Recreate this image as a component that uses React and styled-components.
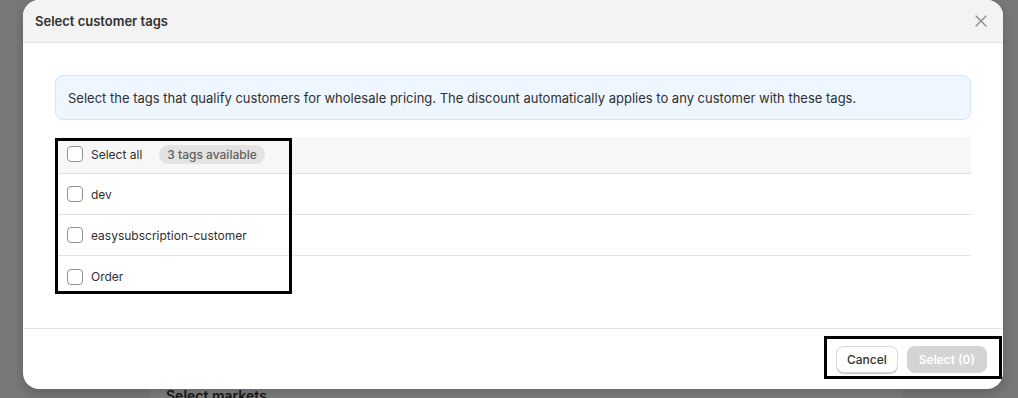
import React from 'react'
import styled, { createGlobalStyle } from 'styled-components'

const GlobalStyle = createGlobalStyle`
  html, body {
    margin: 0;
    padding: 0;
    width: 1018px;
    height: 398px;
    overflow: hidden;
    font-family: Inter, "Noto Sans", "Liberation Sans", sans-serif;
    background: #f1f1f1;
  }
`;

const tags = ['dev', 'easysubscription-customer', 'Order'];

const App = () => {
  return (
    <Screen>
      <GlobalStyle />
      <BackPage>
        <BackCard>Select markets</BackCard>
      </BackPage>
      <Backdrop />
      <Modal>
        <Header>
          <Title>Select customer tags</Title>
          <CloseButton aria-label="Close">
            <svg width="12" height="12" viewBox="0 0 12 12">
              <path d="M1 1L11 11M11 1L1 11" stroke="#8a8a8a" strokeWidth="1.4" strokeLinecap="round" />
            </svg>
          </CloseButton>
        </Header>
        <Body>
          <Banner>
            Select the tags that qualify customers for wholesale pricing. The discount automatically applies to any customer with these tags.
          </Banner>
          <Table>
            <HeadRow>
              <Checkbox />
              <Label>Select all</Label>
              <Badge>3 tags available</Badge>
            </HeadRow>
            {tags.map((t) => (
              <Row key={t}>
                <Checkbox />
                <Label>{t}</Label>
              </Row>
            ))}
          </Table>
        </Body>
        <Footer>
          <Button>Cancel</Button>
          <Button $primary disabled>Select (0)</Button>
        </Footer>
      </Modal>
      <Annotation $x={55} $y={138} $w={237} $h={156} />
      <Annotation $x={824} $y={336} $w={178} $h={43} />
    </Screen>
  )
}

const Screen = styled.div`
  position: relative;
  width: 1018px;
  height: 398px;
  overflow: hidden;
`;

const BackPage = styled.div`
  padding: 375px 0 0 150px;
`;

const BackCard = styled.div`
  width: 720px;
  height: 60px;
  background: #fff;
  border-radius: 12px;
  padding: 12px 16px;
  font-size: 14px;
  font-weight: 600;
  color: #303030;
`;

const Backdrop = styled.div`
  position: absolute;
  inset: 0;
  background: rgba(0, 0, 0, 0.5);
`;

const Modal = styled.div`
  position: absolute;
  left: 23px;
  top: 0;
  width: 980px;
  height: 389px;
  background: #fff;
  border-radius: 16px;
  overflow: hidden;
  display: flex;
  flex-direction: column;
  box-shadow: 0 4px 12px rgba(0, 0, 0, 0.2);
`;

const Header = styled.div`
  height: 42px;
  flex-shrink: 0;
  display: flex;
  align-items: center;
  justify-content: space-between;
  padding: 0 12px;
  background: #f3f3f3;
  border-bottom: 1px solid #e3e3e3;
`;

const Title = styled.h2`
  margin: 0;
  font-size: 13px;
  font-weight: 600;
  color: #303030;
`;

const CloseButton = styled.button`
  border: none;
  background: none;
  padding: 4px;
  margin-right: 0;
  display: flex;
  cursor: pointer;
`;

const Body = styled.div`
  flex: 1;
  padding: 32px 32px 0;
  border-bottom: 1px solid #e3e3e3;
`;

const Banner = styled.div`
  height: 45px;
  box-sizing: border-box;
  display: flex;
  align-items: center;
  padding: 0 12px;
  background: #eef6ff;
  border: 1px solid #d4e5f7;
  border-radius: 8px;
  font-size: 13px;
  color: #303030;
`;

const Table = styled.div`
  margin-top: 17px;
  margin-left: 1px;
`;

const Row = styled.div`
  height: 41px;
  box-sizing: border-box;
  display: flex;
  align-items: center;
  padding: 0 11px;
  border-bottom: 1px solid #e3e3e3;
  &:last-child {
    border-bottom: none;
  }
`;

const HeadRow = styled(Row)`
  height: 37px;
  background: #f7f7f7;
  padding-bottom: 2px;
`;

const Checkbox = styled.span`
  width: 16px;
  height: 16px;
  box-sizing: border-box;
  border: 1px solid #929292;
  border-radius: 4px;
  background: #fff;
  flex-shrink: 0;
`;

const Label = styled.span`
  margin-left: 8px;
  font-size: 12px;
  color: #303030;
`;

const Badge = styled.span`
  margin-left: 17px;
  padding: 2px 8px;
  background: #e3e3e3;
  border-radius: 10px;
  font-size: 12px;
  font-weight: 500;
  color: #616161;
`;

const Footer = styled.div`
  height: 60px;
  flex-shrink: 0;
  display: flex;
  align-items: center;
  justify-content: flex-end;
  gap: 9px;
  padding: 0 16px;
`;

const Button = styled.button`
  height: 27px;
  border-radius: 8px;
  font-family: inherit;
  font-size: 12px;
  font-weight: ${({ $primary }) => ($primary ? 600 : 500)};
  color: ${({ $primary }) => ($primary ? '#fff' : '#303030')};
  background: ${({ $primary }) => ($primary ? '#d4d4d4' : '#fff')};
  border: ${({ $primary }) => ($primary ? 'none' : '1px solid #d8d8d8')};
  box-shadow: ${({ $primary }) => ($primary ? 'none' : '0 1px 0 #c8c8c8')};
  padding: 0 ${({ $primary }) => ($primary ? '12px' : '10px')};
`;

const Annotation = styled.div`
  position: absolute;
  left: ${({ $x }) => $x}px;
  top: ${({ $y }) => $y}px;
  width: ${({ $w }) => $w}px;
  height: ${({ $h }) => $h}px;
  box-sizing: border-box;
  border: 3px solid #000;
  pointer-events: none;
`;

export default App;
